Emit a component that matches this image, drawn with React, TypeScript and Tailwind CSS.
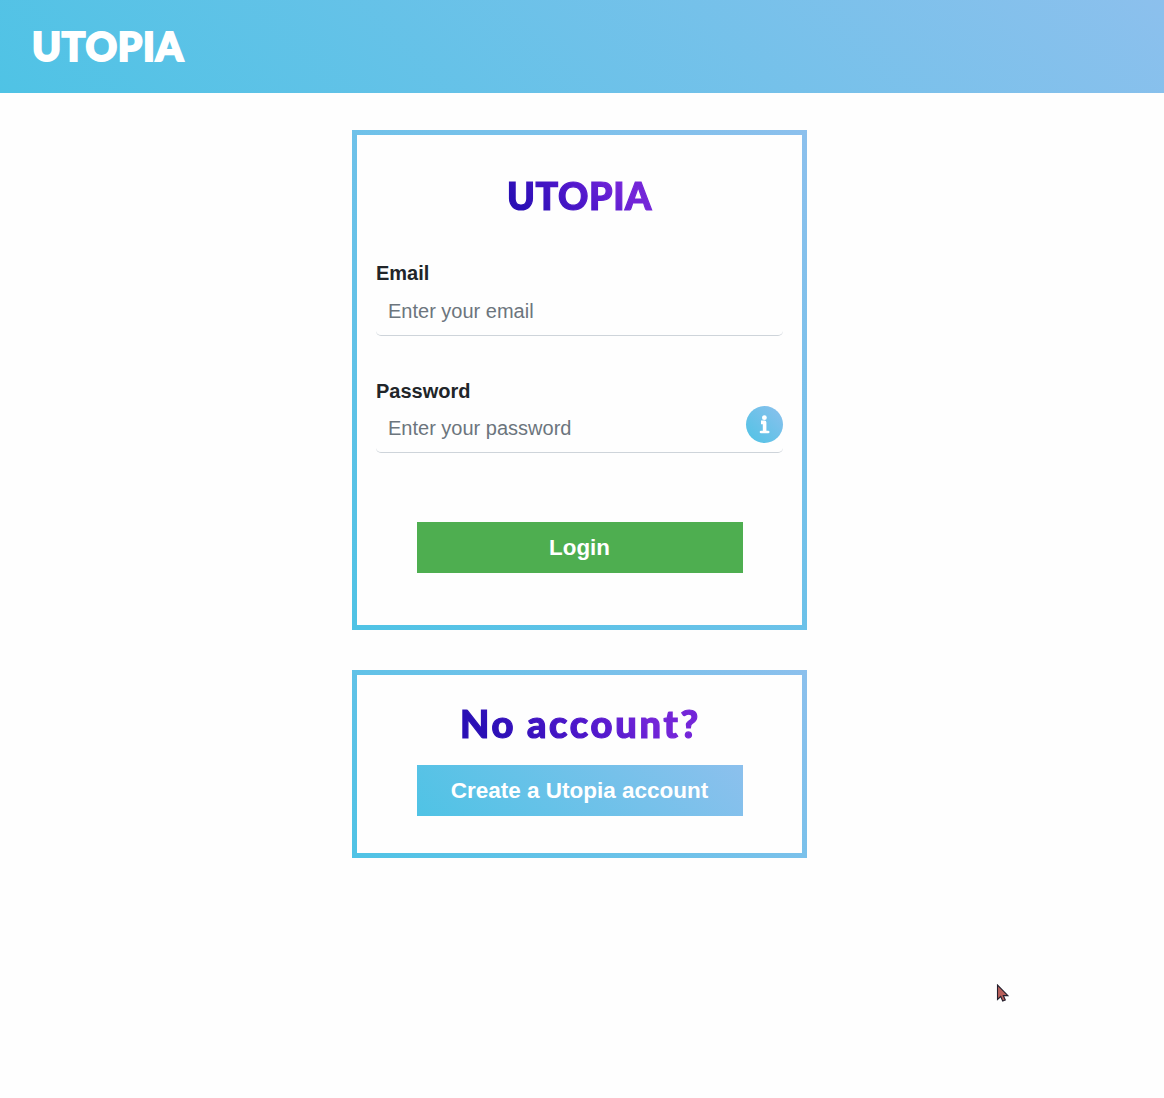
const sky = "bg-[linear-gradient(45deg,#4fc3e5,#8cc0ed)]";
const heading =
  "bg-[linear-gradient(45deg,#2a0fb5_15%,#4f17cb_50%,#7325d8_75%)] bg-clip-text px-px font-[Lato,sans-serif] font-black whitespace-nowrap text-transparent [-webkit-text-stroke:1.2px_transparent]";

function InfoIcon() {
  return (
    <svg className="h-[19px] w-[11px]" viewBox="0 0 11 19" fill="none" stroke="currentColor">
      <circle cx="5.4" cy="2.7" r="2.4" fill="currentColor" stroke="none" />
      <path d="M2 7.4h3.6v9.6" strokeWidth="3.6" strokeLinejoin="round" />
      <path d="M2 17h7.2" strokeWidth="2.6" strokeLinecap="round" />
    </svg>
  );
}

function Field({ label, type, placeholder, info }: { label: string; type: string; placeholder: string; info?: boolean }) {
  return (
    <div className="relative h-[76px]">
      <label className={`block h-[26px] text-[20px] font-bold text-[#212529] ${info ? "leading-[28px]" : "leading-[26px]"}`}>{label}</label>
      <input
        type={type}
        placeholder={placeholder}
        className="block h-[50px] w-full rounded-[5px] border-b border-[#ced4da] bg-transparent px-3 pt-0.5 text-[20px] outline-none placeholder:text-[#6c757d]"
      />
      {info && (
        <span className={`absolute top-[29px] right-0 flex size-[37px] items-center justify-center rounded-full text-white ${sky}`}>
          <InfoIcon />
        </span>
      )}
    </div>
  );
}

export default function App() {
  return (
    <div className="h-[1098px] overflow-hidden bg-[#fefefe] font-['Liberation_Sans',Arial,sans-serif]">
      <header className={`flex h-[93px] items-center pb-[2px] pl-[32px] text-white ${sky}`}>
        <span className="font-[Lato,sans-serif] text-[39px] leading-[48px] font-black tracking-[0.8px] [-webkit-text-stroke:2px_white]">UTOPIA</span>
      </header>
      <main className="ml-[352px] flex w-[455px] flex-col gap-10 pt-[37px]">
        <section className={`h-[500px] p-[5px] ${sky}`}>
          <div className="h-full bg-[#fefefe] px-[19px] pt-[37px]">
            <div className="flex h-12 justify-center">
              <h1 className={`${heading} text-[37.5px] leading-[48px] tracking-[0.6px]`}>UTOPIA</h1>
            </div>
            <form className="mt-10" onSubmit={(e) => e.preventDefault()}>
              <Field label="Email" type="email" placeholder="Enter your email" />
              <div className="h-[41px]" />
              <Field label="Password" type="password" placeholder="Enter your password" info />
              <button className="mx-auto mt-[69px] block h-[51px] w-[326px] bg-[#4eae50] text-[22.4px] font-bold text-white">Login</button>
            </form>
          </div>
        </section>
        <section className={`h-[188px] p-[5px] ${sky}`}>
          <div className="h-full bg-[#fefefe] pt-6">
            <div className="flex h-12 justify-center">
              <h2 className={`${heading} ml-0.5 text-[38px] leading-[48px] tracking-[2.7px] [word-spacing:-1px]`}>No account?</h2>
            </div>
            <button className={`mx-auto mt-[18px] block h-[51px] w-[326px] text-[22.5px] font-bold text-white ${sky}`}>
              Create a Utopia account
            </button>
          </div>
        </section>
      </main>
      <svg className="pointer-events-none absolute top-[984px] left-[996px]" width="14" height="19" viewBox="0 0 14 19">
        <path d="M1.5 1v14.5l3.2-3 2 4.5 2.6-1.1-2-4.3h4.6z" fill="#b9605b" stroke="#25202d" strokeWidth="1.1" />
      </svg>
    </div>
  );
}
